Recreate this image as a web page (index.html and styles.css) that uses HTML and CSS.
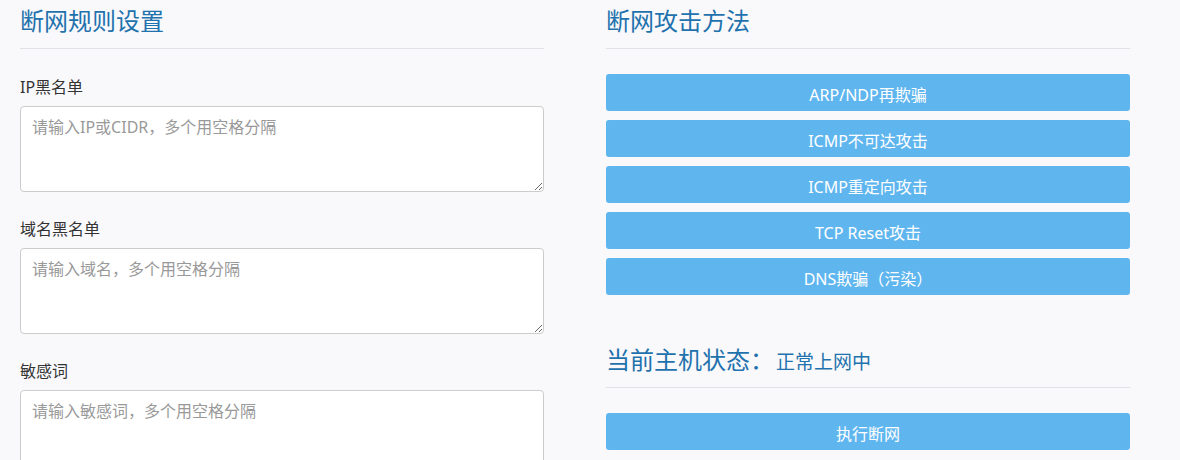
FILE: index.html
```html
<!DOCTYPE html>
<html lang="zh-CN">
<head>
    <meta charset="UTF-8">
    <title>断网控制</title>
    <link rel="stylesheet" href="styles.css">
</head>
<body>

<div class="page">
    <div class="column">
        <h2 class="section-title">断网规则设置</h2>
        <div class="field">
            <label for="ipList">IP黑名单</label>
            <textarea id="ipList" placeholder="请输入IP或CIDR，多个用空格分隔"></textarea>
        </div>
        <div class="field">
            <label for="domainList">域名黑名单</label>
            <textarea id="domainList" placeholder="请输入域名，多个用空格分隔"></textarea>
        </div>
        <div class="field">
            <label for="wordList">敏感词</label>
            <textarea id="wordList" placeholder="请输入敏感词，多个用空格分隔"></textarea>
        </div>
    </div>

    <div class="column">
        <h2 class="section-title">断网攻击方法</h2>
        <div class="btn-list">
            <button type="button" class="btn">ARP/NDP再欺骗</button>
            <button type="button" class="btn">ICMP不可达攻击</button>
            <button type="button" class="btn">ICMP重定向攻击</button>
            <button type="button" class="btn">TCP Reset攻击</button>
            <button type="button" class="btn">DNS欺骗（污染）</button>
        </div>

        <h2 class="section-title status-title">当前主机状态：<span class="status-value">正常上网中</span></h2>
        <div class="btn-list">
            <button type="button" class="btn">执行断网</button>
        </div>
    </div>
</div>

</body>
</html>
```

FILE: styles.css
```css
* { box-sizing: border-box; margin: 0; padding: 0 }
body {
    font-family: "Noto Sans", "Noto Sans CJK SC", sans-serif;
    background: #f9f9fb;
    color: #333;
    font-size: 16px;
}
.page {
    display: flex;
    gap: 62px;
    padding: 8px 20px 0;
}
.column { width: 524px }

.section-title {
    font-size: 24px;
    font-weight: normal;
    line-height: 26px;
    color: #1f72ad;
    padding-bottom: 14px;
    border-bottom: 1px solid #e2e2e6;
}
.status-title { margin-top: 52px }
.status-value {
    font-size: 19px;
    line-height: 1;
    margin-left: 2px;
}

.field { margin-top: 28px }
.field + .field { margin-top: 27px }
.field label {
    display: block;
    line-height: 20px;
    margin-bottom: 9px;
    color: #333;
}
.field textarea {
    display: block;
    width: 100%;
    height: 86px;
    padding: 9px 11px;
    font-family: inherit;
    font-size: 16px;
    line-height: 22px;
    color: #333;
    background: #fff;
    border: 1px solid #ccc;
    border-radius: 4px;
    outline: none;
}
.field textarea::placeholder { color: #999 }

.btn-list {
    display: flex;
    flex-direction: column;
    gap: 9px;
    margin-top: 25px;
}
.btn {
    height: 37px;
    padding-top: 2px;
    font-family: inherit;
    font-size: 16px;
    color: #fff;
    background: #5fb6ef;
    border: none;
    border-radius: 3px;
    cursor: pointer;
}
.btn:active { opacity: 0.85 }
```
